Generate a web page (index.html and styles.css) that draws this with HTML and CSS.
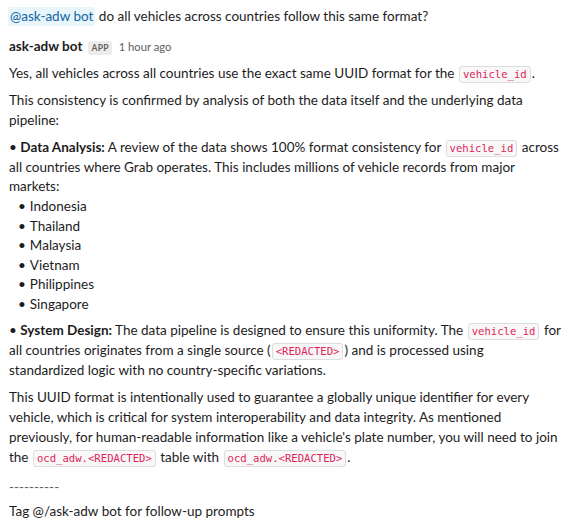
FILE: index.html
```html
<!DOCTYPE html>
<html>
<head>
<meta charset="utf-8">
<link rel="stylesheet" href="styles.css">
</head>
<body>
<div class="thread">
  <p class="question"><span class="mention">@ask-adw bot</span> do all vehicles across countries follow this same format?</p>
  <div class="msg-header">
    <span class="author">ask-adw bot</span>
    <span class="badge">APP</span>
    <span class="time">1 hour ago</span>
  </div>
  <div class="msg-body">
    <p>Yes, all vehicles across all countries use the exact same UUID format for the <code>vehicle_id</code>.</p>
    <p>This consistency is confirmed by analysis of both the data itself and the underlying data pipeline:</p>
    <div class="block">
      <p>• <b>Data Analysis:</b> A review of the data shows 100% format consistency for <code>vehicle_id</code> across all countries where Grab operates. This includes millions of vehicle records from major markets:</p>
      <ul class="list">
        <li>Indonesia</li>
        <li>Thailand</li>
        <li>Malaysia</li>
        <li>Vietnam</li>
        <li>Philippines</li>
        <li>Singapore</li>
      </ul>
    </div>
    <p>• <b>System Design:</b> The data pipeline is designed to ensure this uniformity. The <code>vehicle_id</code> for all countries originates from a single source (<code>&lt;REDACTED&gt;</code>) and is processed using standardized logic with no country-specific variations.</p>
    <p>This UUID format is intentionally used to guarantee a globally unique identifier for every vehicle, which is critical for system interoperability and data integrity. As mentioned previously, for human-readable information like a vehicle's plate number, you will need to join the <code>ocd_adw.&lt;REDACTED&gt;</code> table with <code>ocd_adw.&lt;REDACTED&gt;</code>.</p>
    <p class="sep">----------</p>
    <p class="footer">Tag @/ask-adw bot for follow-up prompts</p>
  </div>
</div>
</body>
</html>
```
FILE: styles.css
```css
html, body {
  margin: 0;
  padding: 0;
  background: #ffffff;
}
body {
  font-family: Lato, "Noto Sans", sans-serif;
  font-size: 13.5px;
  line-height: 19.8px;
  color: #1d1c1d;
}
.thread {
  padding: 7px 18px 0 9px;
}
p {
  margin: 0;
}
.mention {
  color: #1264a3;
  background: #e8f5fa;
  border-radius: 3px;
  padding: 1px 2px 2px 2px;
  margin-left: -1px;
}
.msg-header {
  display: flex;
  align-items: baseline;
  gap: 6px;
  margin-top: 9px;
  line-height: 20px;
}
.author {
  font-weight: 700;
  font-size: 13.5px;
}
.badge {
  font-size: 8.5px;
  font-weight: 700;
  color: #616061;
  background: #ececec;
  border-radius: 2px;
  padding: 0 3px;
  line-height: 14px;
  letter-spacing: 0.3px;
}
.time {
  font-size: 11.2px;
  color: #616061;
  margin-left: 1px;
}
.msg-body {
  margin-top: 7px;
  display: flex;
  flex-direction: column;
  gap: 7.3px;
}
code {
  font-family: "DejaVu Sans Mono", monospace;
  font-size: 10.6px;
  line-height: 12px;
  color: #e01e5a;
  background: #f8f8f8;
  border: 1px solid #dddddd;
  border-radius: 3px;
  padding: 1px 3px 2px 3px;
  margin: 0 1px;
}
.list {
  margin: 0;
  padding: 0 0 0 9px;
  list-style: none;
  line-height: 19.5px;
}
.list li::before {
  content: "•";
  margin-right: 4px;
}
.sep {
  color: #616061;
  margin-top: 3px;
}
.footer {
  margin-top: -3px;
}
```
